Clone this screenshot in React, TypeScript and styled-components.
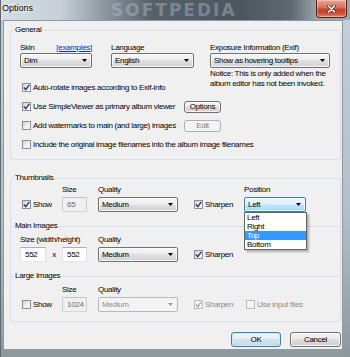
import React from "react";
import styled, { createGlobalStyle } from "styled-components";

const GlobalStyle = createGlobalStyle`
  html, body { margin: 0; padding: 0; background: #59646c; }
  body {
    font-family: "Liberation Sans", Arial, sans-serif;
    font-size: 8px;
    letter-spacing: -0.3px;
    color: #000;
  }
  *, *::before, *::after { box-sizing: border-box; }
`;

type Variant = "normal" | "focus" | "disabled";

const Window = styled.div`
  position: relative;
  width: 350px;
  height: 357px;
  display: flex;
  flex-direction: column;
  overflow: hidden;
  background: linear-gradient(180deg, #c6d0d8 0%, #b3bec6 60%, #8d989d 100%);
  border-left: 1px solid #616b73;
`;

const TitleBar = styled.div`
  position: relative;
  height: 20px;
  flex: none;
  display: flex;
  align-items: flex-start;
  overflow: hidden;
  background: linear-gradient(
    90deg,
    #d5dce2 0px,
    #c7d0d7 60px,
    #8a959e 105px,
    #56616a 150px,
    #4b565f 240px,
    #5d6870 290px,
    #98a3ab 315px,
    #9aa5ad 350px
  );
`;

const Watermark = styled.span`
  position: absolute;
  left: 110px;
  top: 0;
  height: 20px;
  font-family: "DejaVu Sans", sans-serif;
  font-weight: bold;
  font-size: 17px;
  line-height: 20px;
  letter-spacing: 2px;
  color: rgba(190, 202, 212, 0.4);
  white-space: nowrap;
`;

const Title = styled.span`
  position: relative;
  margin: 3px 0 0 1px;
  font-size: 9px;
  letter-spacing: 0;
  line-height: 11px;
  text-shadow: 0 0 5px #fff, 0 0 3px #fff;
`;

const CloseButton = styled.div`
  position: relative;
  margin-left: auto;
  margin-right: 3px;
  width: 31px;
  height: 18px;
  border: 1px solid #5a2118;
  border-top: none;
  border-radius: 0 0 4px 4px;
  background: linear-gradient(
    180deg,
    #e8a594 0%,
    #d4735d 45%,
    #c2432b 55%,
    #c9533a 80%,
    #e08a6f 100%
  );
  box-shadow: inset 0 0 0 1px rgba(255, 255, 255, 0.35);
  display: flex;
  align-items: center;
  justify-content: center;
`;

const Frame = styled.div`
  flex: 1;
  display: flex;
  padding: 0 7px 7px 2px;
`;

const Client = styled.div`
  flex: 1;
  display: flex;
  flex-direction: column;
  background: #f0f0f0;
  border: 1px solid #8d99a3;
  padding: 4px 1px 0 6px;
`;

const GroupBox = styled.fieldset<{
  $pt: number;
  $pb: number;
  $mt?: number;
  $top?: boolean;
  $bottom?: boolean;
}>`
  margin: ${(p) => p.$mt ?? 0}px 0 ${(p) => (p.$bottom ? 0 : -5)}px 0;
  min-width: 0;
  padding: ${(p) => p.$pt}px 0 ${(p) => p.$pb}px 0;
  border: 1px solid #d5dfe5;
  border-bottom-width: ${(p) => (p.$bottom ? 1 : 0)}px;
  border-radius: ${(p) => (p.$top ? 3 : 0)}px ${(p) => (p.$top ? 3 : 0)}px
    ${(p) => (p.$bottom ? 3 : 0)}px ${(p) => (p.$bottom ? 3 : 0)}px;
`;

const Legend = styled.legend`
  margin-left: 3px;
  padding: 0 1px;
  line-height: 10px;
  height: 10px;
`;

const GeneralGrid = styled.div`
  margin-left: 9px;
  display: grid;
  grid-template-columns: 72px 19px 83px 16px 120px;
  grid-template-rows: 11px 15px 10px repeat(4, 19px);
`;

const MediaGrid = styled.div`
  margin-left: 9px;
  display: grid;
  grid-template-columns: 42px 36px 94px 52px 1fr;
  grid-template-rows: 10px 15px;
  row-gap: 2px;
`;

const Cell = styled.div<{ $col: string; $row: string }>`
  grid-column: ${(p) => p.$col};
  grid-row: ${(p) => p.$row};
  position: relative;
  display: flex;
  align-items: center;
  min-width: 0;
`;

const FieldLabel = styled.span`
  line-height: 10px;
  white-space: nowrap;
`;

const SpreadLabel = styled.div`
  flex: 1;
  display: flex;
  justify-content: space-between;
  line-height: 10px;
  white-space: nowrap;
`;

const Link = styled.span`
  color: #0033cc;
  text-decoration: underline;
`;

const Notice = styled.div`
  align-self: flex-start;
  margin-top: 1px;
  line-height: 10px;
  white-space: nowrap;
`;

const OptionRow = styled.div`
  flex: 1;
  display: grid;
  grid-template-columns: 164px auto;
  align-items: center;
`;

const SelectBox = styled.div<{ $variant: Variant; $w?: number }>`
  width: ${(p) => (p.$w ? `${p.$w}px` : "100%")};
  height: 15px;
  display: flex;
  align-items: center;
  padding: 0 4px 0 3px;
  border: 1px solid
    ${(p) =>
      p.$variant === "focus"
        ? "#3c7fb1"
        : p.$variant === "disabled"
        ? "#b5b9bd"
        : "#707070"};
  border-radius: 2px;
  background: ${(p) =>
    p.$variant === "focus"
      ? "linear-gradient(180deg, #eaf6fd 0%, #d9f0fc 50%, #bee6fd 50%, #a7d9f5 100%)"
      : p.$variant === "disabled"
      ? "#f4f4f4"
      : "linear-gradient(180deg, #f6f6f6 0%, #ececec 50%, #dfdfdf 50%, #d4d4d4 100%)"};
  box-shadow: inset 0 0 0 1px
    ${(p) => (p.$variant === "disabled" ? "transparent" : "rgba(255,255,255,0.75)")};
  color: ${(p) => (p.$variant === "disabled" ? "#8d8d8d" : "#000")};
`;

const SelectText = styled.span`
  flex: 1;
  line-height: 13px;
  white-space: nowrap;
  overflow: hidden;
`;

const DropList = styled.ul`
  position: absolute;
  top: 100%;
  left: 0;
  width: 63px;
  margin: 0;
  padding: 0;
  list-style: none;
  background: #fff;
  border: 1px solid #646464;
  box-shadow: 2px 2px 2px rgba(0, 0, 0, 0.28);
  z-index: 3;
`;

const DropItem = styled.li<{ $selected?: boolean }>`
  height: 9px;
  line-height: 9px;
  padding-left: 2px;
  background: ${(p) => (p.$selected ? "#3399ff" : "transparent")};
  color: ${(p) => (p.$selected ? "#fff" : "#000")};
`;

const TextBox = styled.div<{ $disabled?: boolean; $w: number }>`
  width: ${(p) => p.$w}px;
  height: 15px;
  line-height: 13px;
  padding-left: 4px;
  border: 1px solid ${(p) => (p.$disabled ? "#bfc3c7" : "#abadb3")};
  border-bottom-color: ${(p) => (p.$disabled ? "#d5d8db" : "#e3e9ef")};
  border-left-color: ${(p) => (p.$disabled ? "#ccd0d3" : "#e2e3ea")};
  border-right-color: ${(p) => (p.$disabled ? "#ccd0d3" : "#dbdfe6")};
  background: ${(p) => (p.$disabled ? "#f0f0f0" : "#fff")};
  color: ${(p) => (p.$disabled ? "#6d6d6d" : "#000")};
`;

const Times = styled.span`
  flex: 1;
  text-align: center;
  line-height: 10px;
`;

const CheckLabel = styled.label<{ $disabled?: boolean }>`
  display: inline-flex;
  align-items: center;
  gap: 2px;
  padding-left: 2px;
  white-space: nowrap;
  line-height: 10px;
  color: ${(p) => (p.$disabled ? "#8d8d8d" : "#000")};
`;

const Box = styled.span<{ $disabled?: boolean }>`
  width: 9px;
  height: 9px;
  flex: none;
  display: flex;
  align-items: center;
  justify-content: center;
  border: 1px solid ${(p) => (p.$disabled ? "#bcbcbc" : "#8e8f8f")};
  background: ${(p) =>
    p.$disabled
      ? "#f4f4f4"
      : "linear-gradient(135deg, #cbd0d6 0%, #eef0f2 55%, #fbfbfb 100%)"};
`;

const PushButton = styled.div<{ $variant: "default" | "normal" | "disabled"; $w: number; $h: number }>`
  width: ${(p) => p.$w}px;
  height: ${(p) => p.$h}px;
  display: flex;
  align-items: center;
  justify-content: center;
  border-radius: 3px;
  border: 1px solid
    ${(p) =>
      p.$variant === "default" ? "#3c7fb1" : p.$variant === "disabled" ? "#adb2b5" : "#707070"};
  background: ${(p) =>
    p.$variant === "disabled"
      ? "#f4f4f4"
      : p.$variant === "default"
      ? "linear-gradient(180deg, #eef6fb 0%, #e4eff6 50%, #d4e4ef 50%, #c6d9e7 100%)"
      : "linear-gradient(180deg, #f2f2f2 0%, #ebebeb 50%, #dddddd 50%, #cfcfcf 100%)"};
  box-shadow: inset 0 0 0 1px
    ${(p) =>
      p.$variant === "default"
        ? "#c9e8f8"
        : p.$variant === "disabled"
        ? "transparent"
        : "rgba(255,255,255,0.8)"};
  color: ${(p) => (p.$variant === "disabled" ? "#838383" : "#000")};
  line-height: 10px;
`;

const ButtonRow = styled.div`
  margin-top: 10px;
  display: flex;
  justify-content: flex-end;
  gap: 9px;
`;

function Arrow({ disabled }: { disabled?: boolean }) {
  return (
    <svg width="5" height="3" viewBox="0 0 5 3">
      <polygon points="0,0 5,0 2.5,3" fill={disabled ? "#9a9a9a" : "#000"} />
    </svg>
  );
}

function Select({
  value,
  variant = "normal",
  w,
  children,
}: {
  value: string;
  variant?: Variant;
  w?: number;
  children?: React.ReactNode;
}) {
  return (
    <>
      <SelectBox $variant={variant} $w={w}>
        <SelectText>{value}</SelectText>
        <Arrow disabled={variant === "disabled"} />
      </SelectBox>
      {children}
    </>
  );
}

function Checkbox({
  label,
  checked,
  disabled,
}: {
  label: string;
  checked?: boolean;
  disabled?: boolean;
}) {
  return (
    <CheckLabel $disabled={disabled}>
      <Box $disabled={disabled}>
        {checked && (
          <svg width="7" height="7" viewBox="0 0 7 7">
            <path
              d="M0.8 3.6 L2.8 5.6 L6.3 0.8"
              fill="none"
              stroke={disabled ? "#a8a8a8" : "#26366e"}
              strokeWidth="1.4"
            />
          </svg>
        )}
      </Box>
      {label}
    </CheckLabel>
  );
}

function CloseGlyph() {
  return (
    <svg width="9" height="8" viewBox="0 0 9 8">
      <path d="M1.5 1 L7.5 7 M7.5 1 L1.5 7" stroke="#5a2a22" strokeWidth="3" strokeLinecap="round" />
      <path d="M1.5 1 L7.5 7 M7.5 1 L1.5 7" stroke="#fff" strokeWidth="1.6" strokeLinecap="round" />
    </svg>
  );
}

export default function App() {
  return (
    <>
      <GlobalStyle />
      <Window>
        <TitleBar>
          <Watermark>SOFTPEDIA</Watermark>
          <Title>Options</Title>
          <CloseButton>
            <CloseGlyph />
          </CloseButton>
        </TitleBar>
        <Frame>
          <Client>
            <GroupBox $pt={7} $pb={5} $top $bottom>
              <Legend>General</Legend>
              <GeneralGrid>
                <Cell $col="1" $row="1">
                  <SpreadLabel>
                    <span>Skin</span>
                    <Link>[examples]</Link>
                  </SpreadLabel>
                </Cell>
                <Cell $col="3" $row="1">
                  <FieldLabel>Language</FieldLabel>
                </Cell>
                <Cell $col="5" $row="1">
                  <FieldLabel>Exposure Information (Exif)</FieldLabel>
                </Cell>
                <Cell $col="1" $row="2">
                  <Select value="Dim" />
                </Cell>
                <Cell $col="3" $row="2">
                  <Select value="English" />
                </Cell>
                <Cell $col="5" $row="2">
                  <Select value="Show as hovering tooltips" />
                </Cell>
                <Cell $col="5" $row="3 / span 2">
                  <Notice>
                    Notice: This is only added when the
                    <br />
                    album editor has not been invoked.
                  </Notice>
                </Cell>
                <Cell $col="1 / 5" $row="4">
                  <OptionRow>
                    <Checkbox checked label="Auto-rotate images according to Exif-info" />
                  </OptionRow>
                </Cell>
                <Cell $col="1 / -1" $row="5">
                  <OptionRow>
                    <Checkbox checked label="Use SimpleViewer as primary album viewer" />
                    <PushButton $variant="normal" $w={37} $h={12}>
                      Options
                    </PushButton>
                  </OptionRow>
                </Cell>
                <Cell $col="1 / -1" $row="6">
                  <OptionRow>
                    <Checkbox label="Add watermarks to main (and large) images" />
                    <PushButton $variant="disabled" $w={37} $h={12}>
                      Edit
                    </PushButton>
                  </OptionRow>
                </Cell>
                <Cell $col="1 / -1" $row="7">
                  <OptionRow>
                    <Checkbox label="Include the original image filenames into the album image filenames" />
                  </OptionRow>
                </Cell>
              </GeneralGrid>
            </GroupBox>

            <GroupBox $pt={2} $pb={14} $mt={13} $top>
              <Legend>Thumbnails</Legend>
              <MediaGrid>
                <Cell $col="2" $row="1">
                  <FieldLabel>Size</FieldLabel>
                </Cell>
                <Cell $col="3" $row="1">
                  <FieldLabel>Quality</FieldLabel>
                </Cell>
                <Cell $col="5" $row="1">
                  <FieldLabel>Position</FieldLabel>
                </Cell>
                <Cell $col="1" $row="2">
                  <Checkbox checked label="Show" />
                </Cell>
                <Cell $col="2" $row="2">
                  <TextBox $disabled $w={25}>
                    65
                  </TextBox>
                </Cell>
                <Cell $col="3" $row="2">
                  <Select value="Medium" w={80} />
                </Cell>
                <Cell $col="4" $row="2">
                  <Checkbox checked label="Sharpen" />
                </Cell>
                <Cell $col="5" $row="2">
                  <Select value="Left" variant="focus" w={62}>
                    <DropList>
                      <DropItem>Left</DropItem>
                      <DropItem>Right</DropItem>
                      <DropItem $selected>Top</DropItem>
                      <DropItem>Bottom</DropItem>
                    </DropList>
                  </Select>
                </Cell>
              </MediaGrid>
            </GroupBox>

            <GroupBox $pt={4} $pb={14}>
              <Legend>Main Images</Legend>
              <MediaGrid>
                <Cell $col="1 / 3" $row="1">
                  <FieldLabel>Size (width/height)</FieldLabel>
                </Cell>
                <Cell $col="3" $row="1">
                  <FieldLabel>Quality</FieldLabel>
                </Cell>
                <Cell $col="1" $row="2">
                  <TextBox $w={26}>552</TextBox>
                  <Times>x</Times>
                </Cell>
                <Cell $col="2" $row="2">
                  <TextBox $w={25}>552</TextBox>
                </Cell>
                <Cell $col="3" $row="2">
                  <Select value="Medium" w={80} />
                </Cell>
                <Cell $col="4" $row="2">
                  <Checkbox checked label="Sharpen" />
                </Cell>
              </MediaGrid>
            </GroupBox>

            <GroupBox $pt={4} $pb={9} $bottom>
              <Legend>Large Images</Legend>
              <MediaGrid>
                <Cell $col="2" $row="1">
                  <FieldLabel>Size</FieldLabel>
                </Cell>
                <Cell $col="3" $row="1">
                  <FieldLabel>Quality</FieldLabel>
                </Cell>
                <Cell $col="1" $row="2">
                  <Checkbox label="Show" />
                </Cell>
                <Cell $col="2" $row="2">
                  <TextBox $disabled $w={25}>
                    1024
                  </TextBox>
                </Cell>
                <Cell $col="3" $row="2">
                  <Select value="Medium" variant="disabled" w={80} />
                </Cell>
                <Cell $col="4" $row="2">
                  <Checkbox checked disabled label="Sharpen" />
                </Cell>
                <Cell $col="5" $row="2">
                  <Checkbox disabled label="Use input files" />
                </Cell>
              </MediaGrid>
            </GroupBox>

            <ButtonRow>
              <PushButton $variant="default" $w={50} $h={15}>
                OK
              </PushButton>
              <PushButton $variant="normal" $w={51} $h={15}>
                Cancel
              </PushButton>
            </ButtonRow>
          </Client>
        </Frame>
      </Window>
    </>
  );
}
